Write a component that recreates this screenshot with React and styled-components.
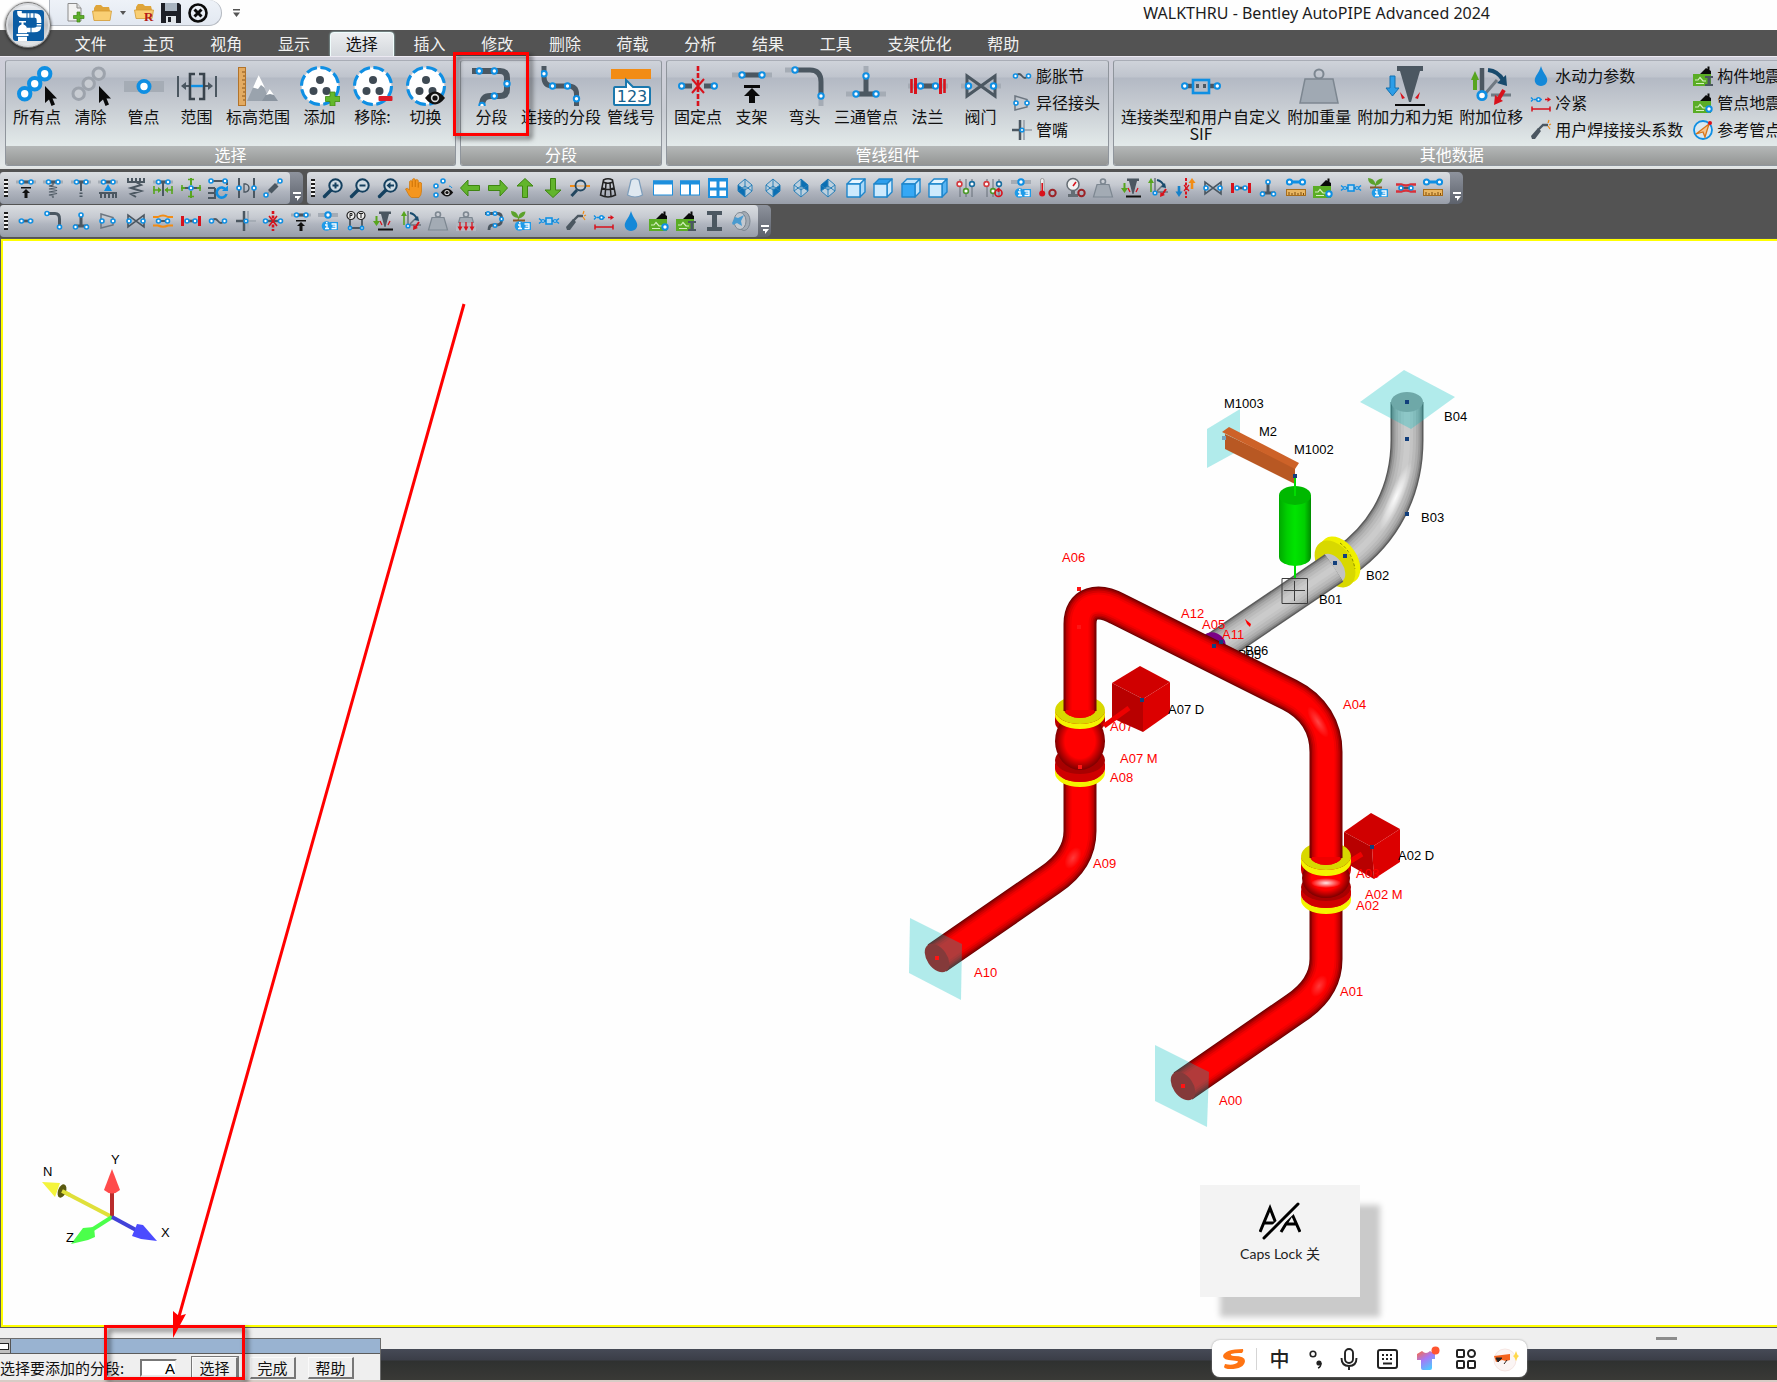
import React from "react";
import styled, { createGlobalStyle, css } from "styled-components";

const COLOR = {
  BLUE: "#0f8fe3",
  STEEL: "#4b5761",
  PALE: "#a5acb5",
  GREEN: "#57a51f",
  RED: "#d8121c",
  ORANGE: "#f28c14",
  CHROME: "#535353",
};
const CJK = `"Noto Sans CJK SC", sans-serif`;

/* ---------- shared icon parts ---------- */

const Ring = ({ x, y, r = 2, w = 1.6, c = COLOR.BLUE }) => (
  <circle cx={x} cy={y} r={r} fill="#fff" stroke={c} strokeWidth={w} />
);
const Big = ({ x, y }) => <Ring x={x} y={y} r={2.7} w={2} />;
const Line = ({ d, c = COLOR.STEEL, w = 2, ...rest }) => (
  <path d={d} fill="none" stroke={c} strokeWidth={w} {...rest} />
);
const TopBar = () => (
  <>
    <Line d="M0 4H20" c={COLOR.PALE} w={3} />
    <Line d="M6 4H15" w={3} />
    <Ring x={5.5} y={4} />
    <Ring x={15} y={4} />
  </>
);
const Cursor = () => (
  <path d="M28 20V37L32 33.500L34.500 40L38 38.500L35.500 32.500H40Z" fill="#0a0a0a" />
);
const Eye = ({ x, y, s = 1 }) => (
  <g transform={`translate(${x} ${y}) scale(${s})`}>
    <path d="M-10 0Q0 -13 10 0Q0 13 -10 0Z" fill="#111" />
    <circle r="4.200" fill="#ddd" />
    <circle r="2.600" fill="#111" />
  </g>
);
const Reel = ({ children }) => (
  <>
    <circle cx="20" cy="20" r="18.500" fill="#fff" stroke={COLOR.BLUE} strokeWidth="3" strokeDasharray="11 3.500" />
    <circle cx="20" cy="14" r="4" fill="#3f4a54" />
    <circle cx="13.500" cy="25" r="4" fill="#3f4a54" />
    <circle cx="26.500" cy="25" r="4" fill="#3f4a54" />
    {children}
  </>
);
const Weight = () => (
  <>
    <circle cx="10" cy="3.500" r="2.500" fill="none" stroke="#7d8791" strokeWidth="1.600" />
    <path d="M4 6.500H16L19.500 19H0.500Z" fill="#a3abb4" stroke="#7d8791" strokeWidth="1.200" />
  </>
);
const InfoBadge = () => (
  <>
    <circle cx="8.500" cy="15" r="4.800" fill="#1f9be8" />
    <rect x="12" y="11" width="8" height="8" fill="#1f9be8" />
    <Line d="M7 14H9V17.500M7 17.500H11M13.500 13H18V17.500H13.500M14.500 15.200H18" c="#fff" w={1.3} />
    <rect x="8" y="11" width="1.500" height="1.500" fill="#fff" />
  </>
);
const Magnifier = ({ children }) => (
  <>
    <Line d="M8 12L1.500 18.500" c="#14405f" w={3.4} strokeLinecap="round" />
    <circle cx="12.500" cy="7.500" r="6.200" fill="#cfdbe3" stroke="#14405f" strokeWidth="2" />
    {children}
  </>
);
const House = ({ children }) => (
  <>
    <path d="M7 8L13 2L14.500 3V0.500H16.500V4L18 5V9H7Z" fill="#0a0a0a" />
    <rect x="0" y="8" width="18" height="12" fill="#5aad25" />
    <Line d="M2 14H5L7 11.500L10 15H13M3 17.500H11" c="#d5efc0" w={1.2} />
    {children}
  </>
);
const Cube = ({ front, top, side }) => (
  <g stroke="#1e86cc" strokeWidth="1.400" strokeLinejoin="round">
    <path d="M1 6L6 1H19L14 6Z" fill={top} />
    <path d="M14 6L19 1V14L14 19Z" fill={side} />
    <path d="M1 6H14V19H1Z" fill={front} />
  </g>
);
const Diamond = ({ fill }) => (
  <>
    <path d="M10 1L17 7V13L10 19L3 13V7Z" fill="#bcd0de" stroke="#2b80b8" strokeWidth="1" />
    <path d={fill} fill="#0b6fb3" />
    <Line d="M10 1V19M3 7L10 12L17 7M3 13L10 8L17 13" c="#2b80b8" w={1} />
  </>
);
const Pane = ({ children }) => (
  <>
    <rect x="0.500" y="3" width="19" height="14" fill="#fff" stroke="#1e8fdd" />
    <rect x="0" y="2.500" width="20" height="4" fill="#1e8fdd" />
    {children}
  </>
);
const Bowtie = () => (
  <>
    <Line d="M2 4V16L18 4V16Z" w={1.6} />
    <Ring x={3} y={10} />
    <Ring x={17} y={10} />
  </>
);
const Sliders = ({ children }) => (
  <>
    <Line d="M4 1V19M10 1V19M16 1V19" c="#666f78" w={1} />
    <Ring x={3.5} y={6} r={2.4} c="#d33a3f" />
    <Ring x={10} y={13} r={2.4} c="#4d9a2a" />
    <Ring x={16} y={6} r={2.4} c="#1a6d9f" />
    {children}
  </>
);
const Arrow = ({ turn }) => (
  <path
    d="M0.500 10L8 2V7.500H19.500V12.500H8V18Z"
    fill="#62b52c"
    stroke="#3f8512"
    strokeWidth="1"
    transform={`rotate(${turn} 10 10)`}
  />
);
const Ruler = () => (
  <>
    <Line d="M3 4H17" c={COLOR.BLUE} w={3} />
    <Ring x={3.5} y={4} r={2.6} w={2} />
    <Ring x={16.5} y={4} r={2.6} w={2} />
    <rect x="0.500" y="11.500" width="19" height="6" fill="#e9b661" stroke="#a86d1b" />
    <Line d="M3 14V17M6 15V17M9 14V17M12 15V17M15 14V17M17.500 15V17" c="#7a4a0d" w={1} />
  </>
);

const SMALL = {
  support: (
    <>
      <TopBar />
      <path d="M5 9H15V10.500H5ZM10 11L14 15H11.500V20H8.500V15H6Z" fill="#111" />
    </>
  ),
  spring: (
    <>
      <TopBar />
      <Line d="M10 5V7L6 8L14 9.500L6 11L14 12.500L6 14L14 15.500L6 17L10 18V20" w={1.2} />
    </>
  ),
  rod: (
    <>
      <TopBar />
      <Line d="M10 5V13" w={2} />
      <Line d="M10 14.500V16M10 17.500V19" w={3} />
    </>
  ),
  ground: (
    <>
      <TopBar />
      <path d="M10 6L14 13H6Z" fill={COLOR.BLUE} />
      <Line d="M1 15H19M3 16V20M7 16V20M11 16V20M15 16V20M18 16V20" w={2} />
    </>
  ),
  coil: (
    <Line d="M1 4H19M2 0V4M6 0V4M10 0V4M14 0V4M18 0V4M10 4L15 7L5 10L15 13L5 16L10 19" w={2} />
  ),
  guide: (
    <>
      <TopBar />
      <Line d="M10 4V18" w={2} />
      <Line d="M0 12H8M12 12H20M1 8V16M19 8V16" c={COLOR.GREEN} w={1.6} />
      <path d="M8.500 12L5 9V15ZM11.500 12L15 9V15Z" fill={COLOR.GREEN} />
    </>
  ),
  restraint: (
    <>
      <Line d="M10 0V7M10 13V20M0 10H7M13 10H20" c={COLOR.GREEN} w={2} />
      <Line d="M7 1.500H13M7 18.500H13M1 7V13M19 7V13" c={COLOR.GREEN} w={1.6} />
      <Line d="M4 10H16" w={2} />
      <Ring x={10} y={10} />
    </>
  ),
  rotate: (
    <>
      <Line d="M1 3H19V7M0 10H7M0 15H7M0 20H7V10" w={2} />
      <Ring x={3} y={3} />
      <Ring x={17} y={3} />
      <Line d="M18 12A5 5 0 1 0 18.500 16" c={COLOR.BLUE} w={2.6} />
      <path d="M14 13H20V7.500Z" fill={COLOR.BLUE} />
    </>
  ),
  gap: (
    <>
      <Line d="M3 0V20M18 0V20" w={2} />
      <Ring x={3} y={10} />
      <Ring x={18} y={10} />
      <Line d="M8 6H10Q13 7 13 10Q13 13 10 14H8Z" w={1.3} />
    </>
  ),
  damper: (
    <>
      <Line d="M3 17L17 3" c="#8a939c" w={1.5} />
      <path d="M5 12L12 5L15.500 8.500L8.500 15.500Z" fill={COLOR.STEEL} />
      <Ring x={3} y={17} />
      <Ring x={17} y={3} />
    </>
  ),
  zoomIn: (
    <Magnifier>
      <Line d="M9.500 7.500H15.500M12.500 4.500V10.500" c="#14405f" w={2} />
    </Magnifier>
  ),
  zoomOut: (
    <Magnifier>
      <Line d="M9.500 7.500H15.500" c="#14405f" w={2} />
    </Magnifier>
  ),
  zoomBack: (
    <Magnifier>
      <path d="M8.500 7.500L12.500 4V6.500H16V8.500H12.500V11Z" fill="#14405f" />
    </Magnifier>
  ),
  hand: (
    <path
      d="M4.500 18L0.500 11Q2 9 4.500 12V3.500Q6 1.500 7.300 3.500V9V1.500Q9 -0.500 10.300 1.500V9V2.500Q12 0.500 13.300 2.500V9.500V5Q15 3.500 16.500 5V13Q16.500 17 14 19.500H6.500Z"
      fill="#f4961f"
      stroke="#cf7507"
      strokeWidth="0.700"
    />
  ),
  look: (
    <>
      <Ring x={10} y={3} />
      <Ring x={3} y={8} />
      <Ring x={3} y={17} />
      <Line d="M16 8Q18 8 19 10" c={COLOR.BLUE} w={1} />
      <Eye x={14} y={14.5} s={0.62} />
    </>
  ),
  left: <Arrow turn={0} />,
  right: <Arrow turn={180} />,
  up: <Arrow turn={90} />,
  down: <Arrow turn={270} />,
  probe: (
    <>
      <Line d="M0 8H20" c={COLOR.ORANGE} w={2} />
      <Line d="M7 12L1.500 18" c="#22465f" w={3} />
      <circle cx="10.500" cy="7.500" r="5" fill="#c9d2da" fillOpacity="0.600" stroke="#22465f" strokeWidth="1.800" />
    </>
  ),
  wireCone: (
    <Line
      d="M5.500 2L2.500 17Q10 21 17.500 17L14.500 2Q10 -0.500 5.500 2ZM5 4Q10 6.500 15 4M4 10Q10 13 16 10M8 5L7 18.500M12 5L13 18.500"
      c="#222"
      w={1.5}
    />
  ),
  solidCone: (
    <path d="M6 2Q10 -0.500 14 2L17.500 17Q10 21 2.500 17Z" fill="#dfe8f0" stroke="#7d9dbb" strokeWidth="1.200" />
  ),
  window1: <Pane />,
  window2: (
    <Pane>
      <Line d="M10 5V17" c="#1e8fdd" w={2} />
    </Pane>
  ),
  window4: (
    <>
      <rect x="1" y="1" width="18" height="18" fill="#fff" stroke="#1e8fdd" strokeWidth="2" />
      <Line d="M10 1V19M0 2H20M0 11H20" c="#1e8fdd" w={3} />
    </>
  ),
  isoSW: <Diamond fill="M3 7L10 12V19L3 13Z" />,
  isoSE: <Diamond fill="M17 7L10 12V19L17 13Z" />,
  isoNE: <Diamond fill="M10 1L17 7V13L10 8Z" />,
  isoNW: <Diamond fill="M10 1L3 7V13L10 8Z" />,
  cube: <Cube front="#cdeafd" top="#e8f6ff" side="#a9d8f8" />,
  cubeTop: <Cube front="#cdeafd" top="#2c9fee" side="#cdeafd" />,
  cubeFront: <Cube front="#35a8f5" top="#bfe4fc" side="#bfe4fc" />,
  cubeLight: <Cube front="#cdeafd" top="#e3f4ff" side="#57b4f3" />,
  sliders: <Sliders />,
  slidersOff: (
    <Sliders>
      <circle cx="15.500" cy="15" r="3.500" fill="none" stroke="#d8121c" strokeWidth="1.600" />
      <Line d="M15.500 10V14" c="#d8121c" w={2} />
    </Sliders>
  ),
  info: (
    <>
      <rect x="0" y="2" width="20" height="4" fill={COLOR.PALE} />
      <Big x={10} y={4} />
      <InfoBadge />
    </>
  ),
  thermo: (
    <>
      <rect x="2.500" y="0.500" width="3.500" height="14" rx="1.700" fill="#eee" stroke="#8c8c8c" strokeWidth="0.800" />
      <circle cx="4.200" cy="15.500" r="3" fill={COLOR.RED} />
      <Line d="M4.200 5V15" c={COLOR.RED} w={1.6} />
      <circle cx="14.500" cy="15" r="3.200" fill="none" stroke="#9c2226" strokeWidth="2" />
    </>
  ),
  gauge: (
    <>
      <circle cx="7" cy="6.500" r="6" fill="#f1f1f1" stroke="#656d74" strokeWidth="1.500" />
      <Line d="M7 8L10 4" c={COLOR.RED} w={1.5} />
      <path d="M5 13H9V16H12V19H2V16H5Z" fill="#656d74" />
      <circle cx="15.500" cy="15" r="3.200" fill="none" stroke="#9c2226" strokeWidth="2" />
    </>
  ),
  weight: <Weight />,
  weights: (
    <>
      <Weight />
      <rect x="0" y="12" width="20" height="8" fill="#b4b9c2" />
      <Line d="M4 11V18M10 11V18M16 11V18" c={COLOR.RED} w={1.3} />
      <path d="M1.500 15.500H6.500L4 20ZM7.500 15.500H12.500L10 20ZM13.500 15.500H18.500L16 20Z" fill={COLOR.RED} />
    </>
  ),
  force: (
    <>
      <path d="M2.500 5H4.500V10H7L3.500 15L0 10H2.500Z" fill={COLOR.GREEN} />
      <path d="M6 0.500H18V3H16L12.500 16H11.500L8 3H6Z" fill={COLOR.STEEL} />
      <Line d="M7 10L9 14M17 10L15 14" c={COLOR.RED} w={1.3} />
      <Line d="M5 18.500H20" c="#111" w={2} />
    </>
  ),
  displace: (
    <>
      <Line d="M3 5V14" c={COLOR.GREEN} w={1.6} />
      <path d="M0 5H6L3 0Z" fill={COLOR.GREEN} />
      <Line d="M7 0V14M9 13L16 6M7 14H20" c="#6b747d" w={1.5} />
      <Line d="M9 2Q14 3 16 8" c="#174a6d" w={2} />
      <path d="M18 10L13 9L17 5Z" fill="#174a6d" />
      <Line d="M18 11L14 17" c={COLOR.RED} w={2} />
      <path d="M12 19L12.500 14L17 17Z" fill={COLOR.RED} />
      <Ring x={7} y={15} r={1.8} />
    </>
  ),
  thermalMove: (
    <>
      <Line d="M10 0V20" c={COLOR.RED} w={2} strokeDasharray="3 1.500" />
      <Line d="M8 7L13 13M13 7L8 13" c={COLOR.RED} w={1.2} />
      <Line d="M3 8V15" c="#1681c9" w={2.6} />
      <path d="M-0.500 13.500H6.500L3 19Z" fill="#1681c9" />
      <Line d="M16 11V4" c={COLOR.ORANGE} w={2.6} />
      <path d="M12.500 5H19.500L16 0Z" fill={COLOR.ORANGE} />
    </>
  ),
  valve: <Bowtie />,
  flange: (
    <>
      <Line d="M5 10H15" w={2.6} />
      <Line d="M1.500 5V15M18.500 5V15" c={COLOR.RED} w={3} />
      <Ring x={6} y={10} />
      <Ring x={14} y={10} />
    </>
  ),
  tee: (
    <>
      <Line d="M3 15H17" w={3} />
      <Line d="M10 4V15" w={3} />
      <Ring x={10} y={4} />
      <Ring x={4.5} y={16} />
      <Ring x={15.5} y={16} />
    </>
  ),
  ruler: <Ruler />,
  quakePoint: (
    <House>
      <Big x={16} y={16} />
    </House>
  ),
  quakeBeam: (
    <House>
      <path d="M12 10H20V12H17.500V18H20V20H12V18H14.500V12H12Z" fill={COLOR.STEEL} />
    </House>
  ),
  joint: (
    <>
      <Line d="M0 7.500L3 10L0 12.500M20 7.500L17 10L20 12.500" c={COLOR.BLUE} w={1.4} />
      <Line d="M3 10H17" w={2} />
      <rect x="7" y="7" width="6" height="6" fill="#b8d9ee" stroke={COLOR.BLUE} strokeWidth="1.600" />
      <Ring x={4} y={10} r={1.4} w={1.2} />
      <Ring x={16} y={10} r={1.4} w={1.2} />
    </>
  ),
  plant: (
    <>
      <path d="M7 7Q0 6 0 0Q6 0 7.500 6Q8 1 14.500 0.500Q14 6 8 7.500V9H6.500Z" fill="#5ba22c" />
      <rect x="2" y="8.500" width="12" height="2" fill="#8a5a2b" />
      <InfoBadge />
    </>
  ),
  redWave: (
    <>
      <Line d="M0 6.500H5Q10 8.500 15 6.500H20M0 13.500H5Q10 11.500 15 13.500H20" c="#d8303a" w={2.6} />
      <Line d="M3 10H17" w={2} />
      <Ring x={5} y={10} />
      <Ring x={15} y={10} />
    </>
  ),
  orangeWave: (
    <>
      <Line d="M0 6H5Q10 3 15 6H20M0 14.500H5Q10 17 15 14.500H20" c={COLOR.ORANGE} w={2} />
      <Line d="M3 10H17" w={2} />
      <Ring x={5.5} y={10} />
      <Ring x={14.5} y={10} />
    </>
  ),
  pipe: (
    <>
      <Line d="M2 10H18" c={COLOR.PALE} w={3} />
      <Line d="M5 10H15" w={2.6} />
      <Ring x={5.5} y={10} />
      <Ring x={14.5} y={10} />
    </>
  ),
  bend: (
    <>
      <Line d="M2 2.500H12Q16.500 2.500 16.500 8V17" w={3} />
      <Ring x={4} y={2.5} />
      <Ring x={16.5} y={16} />
    </>
  ),
  reducer: (
    <>
      <Line d="M3 3L15 6.500V14L3 17Z" c="#6c7680" w={1.5} />
      <Ring x={4} y={10} />
      <Ring x={15} y={10} />
    </>
  ),
  bellows: (
    <>
      <Line d="M4 10Q7 6 10 10T16 10" w={1.8} />
      <Ring x={3.5} y={10} />
      <Ring x={16.5} y={10} />
    </>
  ),
  nozzle: (
    <>
      <Line d="M12 10H20M12 0V20" c={COLOR.PALE} w={2} />
      <Line d="M8 0V20M0 10H9" w={2.5} />
      <Ring x={10} y={10} r={1.8} />
    </>
  ),
  anchor: (
    <>
      <Line d="M10 0V20" c={COLOR.RED} w={2.6} strokeDasharray="3 1.500" />
      <Line d="M2 10H18" w={2.4} />
      <Line d="M6 5L14 15M14 5L6 15" c={COLOR.RED} w={1.6} />
      <Ring x={2.5} y={10} />
      <Ring x={17.5} y={10} />
    </>
  ),
  pressure: (
    <>
      <Line d="M4 8V17H16V8" w={1.8} />
      <circle cx="5" cy="4.500" r="4" fill="#eee" stroke="#222" strokeWidth="1.200" />
      <circle cx="15" cy="4.500" r="4" fill="#eee" stroke="#222" strokeWidth="1.200" />
      <Line d="M4 7V2.500H6V4.500H4M13 2.500H17M15 2.500V7" c="#222" w={1} />
      <Ring x={4} y={17} r={1.6} />
      <Ring x={16} y={17} r={1.6} />
    </>
  ),
  segment: (
    <>
      <Line d="M1 2.500H13Q17.500 2.500 17.500 6.500V9Q17.500 14 13 14H9Q5 14 5 19" w={2.8} />
      <Ring x={4} y={2.5} r={1.7} />
      <Ring x={11} y={2.5} r={1.7} />
      <Ring x={17.5} y={8} r={1.7} />
      <Ring x={11} y={14.5} r={1.7} />
    </>
  ),
  weld: (
    <>
      <path d="M0 16L7 8L10 11L4 19H1Z" fill={COLOR.STEEL} />
      <Line d="M7 10L12 5H17" w={2.4} />
      <Line d="M17 3L18 0M18 5L20 4M17 6L19 9" c={COLOR.ORANGE} w={1.2} />
    </>
  ),
  coldPull: (
    <>
      <Line d="M0 4.500L2 6.500L0 8.500M3 6.500H11" c={COLOR.BLUE} w={1.4} />
      <Ring x={7.5} y={6.5} r={1.8} />
      <Line d="M14 6.500H18M1 16H19M1 13.500V18.500M19 13.500V18.500" c={COLOR.RED} w={1.5} />
      <path d="M16.500 4L20 6.500L16.500 9Z" fill={COLOR.RED} />
    </>
  ),
  drop: <path d="M10 0Q11 4 15 10C18.500 16 14 20 10 20S1.500 16 5 10Q9 4 10 0Z" fill="#1488d8" />,
  beam: <path d="M3 0H18V4H13V16H18V20H3V16H8V4H3Z" fill={COLOR.STEEL} />,
  speaker: (
    <>
      <ellipse cx="13" cy="10" rx="6" ry="9.500" fill="#a3abb4" stroke="#7d8791" />
      <ellipse cx="9" cy="10" rx="6" ry="8.500" fill="#c3c9d0" stroke="#7d8791" />
      <path d="M1 12L4 6L7 7L13 4L10 10L11 15L6 12L2 14Z" fill="#4a9bd0" />
    </>
  ),
  compass: (
    <>
      <circle cx="10" cy="10" r="9" fill="#dbe8f0" stroke={COLOR.BLUE} strokeWidth="1.800" />
      <path d="M3 14L16 4L12 17L10 12Z" fill="#f7c48e" stroke="#d8761a" strokeWidth="1.300" />
      <circle cx="17" cy="3" r="2" fill={COLOR.RED} />
    </>
  ),
};

const CHAIN = [[27.7, 7.7], [17.7, 17.7], [7.7, 27.7]];

const LARGE = {
  allPoints: (
    <>
      {CHAIN.map(([x, y]) => (
        <Ring key={x} x={x} y={y} r={5.7} w={4} />
      ))}
      <Cursor />
    </>
  ),
  clear: (
    <>
      {CHAIN.map(([x, y]) => (
        <circle key={x} cx={x} cy={y} r="5.700" fill="#c8ccd2" stroke="#9da3ac" strokeWidth="3" />
      ))}
      <Cursor />
    </>
  ),
  point: (
    <>
      <rect x="0" y="15" width="40" height="11" fill={COLOR.PALE} />
      <Ring x={20} y={20.5} r={5.6} w={3.8} />
    </>
  ),
  range: (
    <>
      <Line d="M1 10V31M39 10V31M5 20H12M28 20H35" w={2} />
      <path d="M4 20L9 16V24ZM36 20L31 16V24Z" fill={COLOR.STEEL} />
      <Line d="M18 8H13V33H18M22 8H27V33H22" c="#39434c" w={2.6} />
      <Line d="M14 20H26" c={COLOR.BLUE} w={2.4} />
    </>
  ),
  elevation: (
    <>
      <rect x="0.500" y="1.500" width="7" height="38" fill="#e3ab62" stroke="#b2732a" />
      <Line d="M4 6H7M5 10H7M4 14H7M5 18H7M4 22H7M5 26H7M4 30H7M5 34H7" c="#8a5518" w={1} />
      <path d="M9 35L20.700 9L32 35Z" fill="#9aa3ad" />
      <path d="M20.700 9L27 22L23 19L20 23L15 21.500Z" fill="#fff" />
      <path d="M24 35L31.700 23L40 35Z" fill="#8a949f" />
      <path d="M31.700 23L36 29L32 28L28 29Z" fill="#fff" />
    </>
  ),
  add: (
    <Reel>
      <path d="M30 26H35V30.500H40V35.500H35V40H30V35.500H25.500V30.500H30Z" fill="#63b82c" stroke="#418a13" strokeWidth="0.800" />
    </Reel>
  ),
  remove: (
    <Reel>
      <rect x="25.500" y="30" width="14" height="5" rx="1" fill="#dc1c28" />
    </Reel>
  ),
  toggle: (
    <Reel>
      <Eye x={29} y={32} />
    </Reel>
  ),
  segment: (
    <>
      <Line d="M0 5H28Q35 5 35 12V23Q35 30 28 30H18Q10 30 10 40" w={6} />
      {[[7.3, 5], [22.3, 5], [35, 17.7], [22.3, 30], [10, 39.5]].map(([x, y]) => (
        <Big key={`${x}-${y}`} x={x} y={y} />
      ))}
    </>
  ),
  connected: (
    <>
      <Line d="M3 0V11Q3 20 12 20H27Q35.500 20 35.500 28V40" w={5} />
      <Big x={3} y={7.7} />
      <Big x={11.5} y={20} />
      <Big x={26.5} y={20} />
      <Big x={35.5} y={32.7} />
    </>
  ),
  lineNo: (
    <>
      <rect x="0" y="3" width="40" height="10" fill="#f28c14" />
      <path d="M4 21H15V14L22 21H37Q39 21 39 23V37Q39 39 37 39H4Q3 39 3 37V23Q3 21 4 21Z" fill="#fff" stroke="#1a78ae" strokeWidth="2" />
      <text x="21" y="36" textAnchor="middle" fontFamily="DejaVu Sans, sans-serif" fontSize="16" fill="#175f8c">
        123
      </text>
    </>
  ),
  anchor: (
    <>
      <Line d="M3 20H37" w={5} />
      <rect x="14" y="16" width="12" height="8" fill="#bfc4cc" />
      <Line d="M20 0V40" c={COLOR.RED} w={2.6} strokeDasharray="5 2" />
      <Line d="M14 13L26 27M26 13L14 27" c={COLOR.RED} w={2} />
      <Big x={3.7} y={20} />
      <Big x={36.3} y={20} />
    </>
  ),
  support: (
    <>
      <Line d="M0 9H40" c={COLOR.PALE} w={5} />
      <Line d="M10 9H30" w={5} />
      <Big x={10} y={9} />
      <Big x={30} y={9} />
      <path d="M12 19H28V22H12ZM20 22L28 30H23V37H17V30H12Z" fill="#0a0a0a" />
    </>
  ),
  elbow: (
    <>
      <Line d="M0 4H10M36 28V40" c={COLOR.PALE} w={5} />
      <Line d="M10 4H25Q36 4 36 16V29" w={5} />
      <Big x={10} y={4} />
      <Big x={36} y={30} />
    </>
  ),
  tee: (
    <>
      <Line d="M0 28H40M20 0V10" c={COLOR.PALE} w={5} />
      <Line d="M10 28H30M20 10V28" w={5} />
      <Big x={20} y={10} />
      <Big x={10} y={28} />
      <Big x={30} y={28} />
    </>
  ),
  flange: (
    <>
      <Line d="M0 20H40" c={COLOR.PALE} w={5} />
      <Line d="M12 20H28" w={5} />
      <Line d="M3.500 13V27M36.500 13V27" c={COLOR.RED} w={2.6} />
      <Line d="M7.500 12V28M32.500 12V28" c={COLOR.RED} w={3} />
      <Big x={12.5} y={20} />
      <Big x={27.5} y={20} />
    </>
  ),
  valve: (
    <>
      <Line d="M0 20H40" c={COLOR.PALE} w={5} />
      <Line d="M6 10V30L34 10V30Z" w={3} />
      <Big x={7.5} y={20} />
      <Big x={32.5} y={20} />
    </>
  ),
  userSif: (
    <>
      <Line d="M3 20H37" w={4.5} />
      <rect x="12" y="14" width="16" height="13" fill="#b5bcc6" stroke={COLOR.BLUE} strokeWidth="2.600" />
      <Line d="M15 20H18M22 20H25" w={4} />
      <Big x={3.7} y={20} />
      <Big x={36.3} y={20} />
    </>
  ),
  weight: (
    <>
      <circle cx="20" cy="8" r="4.500" fill="none" stroke="#7d8791" strokeWidth="2" />
      <path d="M6 13H34L39 37H1Z" fill="#a0a9b3" stroke="#7d8791" strokeWidth="1.500" />
    </>
  ),
  force: (
    <>
      <path d="M5 10H10V22H14L7.500 30L1 22H5Z" fill="#2b9de8" stroke="#1371b0" />
      <path d="M12 0H38V5H35L26 36H24L15 5H12Z" fill={COLOR.STEEL} />
      <path d="M15 26L20 32L17 33ZM35 26L30 32L33 33Z" fill={COLOR.RED} />
      <rect x="10" y="38" width="30" height="2.500" fill="#0a0a0a" />
    </>
  ),
  displace: (
    <>
      <Line d="M11 30V2" w={4.5} />
      <Line d="M14 28L26 14M20 29H40" c="#6f7982" w={3} />
      <Line d="M4 24V10" c={COLOR.GREEN} w={4} />
      <path d="M0 14H8L4 5Z" fill={COLOR.GREEN} />
      <Line d="M17 4Q27 5 32 14" c="#174a6d" w={4} />
      <path d="M36 20L26 17L35 9Z" fill="#174a6d" />
      <Line d="M33 24L27 34" c={COLOR.RED} w={4} />
      <path d="M23 39L24 29L32 35Z" fill={COLOR.RED} />
      <Ring x={11} y={29.5} r={4.2} w={2.8} />
    </>
  ),
};

/* ---------- data ---------- */

const TABS = [
  "文件", "主页", "视角", "显示", "选择", "插入", "修改",
  "删除", "荷载", "分析", "结果", "工具", "支架优化", "帮助",
];

const GROUPS = [
  {
    title: "选择",
    buttons: [
      ["allPoints", "所有点"],
      ["clear", "清除"],
      ["point", "管点"],
      ["range", "范围"],
      ["elevation", "标高范围"],
      ["add", "添加"],
      ["remove", "移除:"],
      ["toggle", "切换"],
    ],
    lists: [],
  },
  {
    title: "分段",
    buttons: [
      ["segment", "分段"],
      ["connected", "连接的分段"],
      ["lineNo", "管线号"],
    ],
    lists: [],
  },
  {
    title: "管线组件",
    buttons: [
      ["anchor", "固定点"],
      ["support", "支架"],
      ["elbow", "弯头"],
      ["tee", "三通管点"],
      ["flange", "法兰"],
      ["valve", "阀门"],
    ],
    lists: [
      [
        ["bellows", "膨胀节"],
        ["reducer", "异径接头"],
        ["nozzle", "管嘴"],
      ],
    ],
  },
  {
    title: "其他数据",
    buttons: [
      ["userSif", "连接类型和用户自定义", "SIF"],
      ["weight", "附加重量"],
      ["force", "附加力和力矩"],
      ["displace", "附加位移"],
    ],
    lists: [
      [
        ["drop", "水动力参数"],
        ["coldPull", "冷紧"],
        ["weld", "用户焊接接头系数"],
      ],
      [
        ["quakeBeam", "构件地震"],
        ["quakePoint", "管点地震"],
        ["compass", "参考管点"],
      ],
    ],
  },
];

const SUPPORT_TOOLS = "support spring rod ground coil guide restraint rotate gap damper".split(" ");
const VIEW_TOOLS = (
  "zoomIn zoomOut zoomBack hand look left right up down probe wireCone solidCone " +
  "window1 window2 window4 isoSW isoSE isoNE isoNW cube cubeTop cubeFront cubeLight " +
  "sliders slidersOff info thermo gauge weight force displace thermalMove valve flange " +
  "tee ruler quakePoint joint plant redWave ruler"
).split(" ");
const INSERT_TOOLS = (
  "pipe bend tee reducer valve orangeWave flange bellows nozzle anchor support info pressure " +
  "force displace weight weights segment plant joint weld coldPull drop quakePoint quakeBeam beam speaker"
).split(" ");

const LABELS = [
  ["M1003", 1224, 408], ["M2", 1259, 436], ["M1002", 1294, 454],
  ["B04", 1444, 421], ["B03", 1421, 522], ["B02", 1366, 580], ["B01", 1319, 604],
  ["B06", 1245, 655], ["A07 D", 1168, 714], ["A02 D", 1398, 860],
  ["A06", 1062, 562, 1], ["A12", 1181, 618, 1], ["A05", 1202, 629, 1], ["A11", 1222, 639, 1],
  ["A07 M", 1120, 763, 1], ["A08", 1110, 782, 1], ["A09", 1093, 868, 1], ["A10", 974, 977, 1],
  ["A04", 1343, 709, 1], ["A02 M", 1365, 899, 1], ["A02", 1356, 910, 1], ["A03", 1356, 878, 1],
  ["A01", 1340, 996, 1], ["A00", 1219, 1105, 1],
];

/* ---------- 3D model ---------- */

const GRAY_PIPE = [[33, "#5c5c5c"], [30, "#828282"], [27, "#9b9b9b"], [23, "#adadad"], [18, "#bababa"], [12, "#c4c4c4"], [6, "#cbcbcb"]];
const RED_PIPE = [[33, "#6e0000"], [31, "#930000"], [28, "#b80000"], [25, "#d60000"], [21, "#f00000"], [17, "#ff0000"]];

const Pipe = ({ d, layers = RED_PIPE }) => (
  <g fill="none">
    {layers.map(([w, c]) => (
      <path key={w} d={d} stroke={c} strokeWidth={w} />
    ))}
  </g>
);

const PipeEnd = ({ x, y }) => (
  <ellipse cx={x} cy={y} rx="16" ry="10" fill="#be0000" transform={`rotate(55 ${x} ${y})`} />
);

const Plane = ({ points }) => <polygon points={points} fill="rgba(0,193,193,0.300)" />;

const Dot = ({ x, y, c = "#123f7c" }) => <rect x={x - 2} y={y - 2} width="4" height="4" fill={c} />;

const Drum = ({ x, y, h, fill, top }) => (
  <>
    <path d={`M${x - 25} ${y}A25 14 0 0 0 ${x + 25} ${y}V${y + h}A25 14 0 0 1 ${x - 25} ${y + h}Z`} fill={fill} />
    <ellipse cx={x} cy={y} rx="25" ry="14" fill={top} />
  </>
);

const Model = () => (
  <ModelSvg aria-hidden="true">
    <defs>
      <radialGradient id="ball">
        <stop offset="0.600" stopColor="#ff0000" />
        <stop offset="1" stopColor="#7c0000" />
      </radialGradient>
      <radialGradient id="shine">
        <stop offset="0" stopColor="#fff" stopOpacity="0.900" />
        <stop offset="1" stopColor="#fff" stopOpacity="0" />
      </radialGradient>
      <linearGradient id="can">
        <stop offset="0" stopColor="#00a800" />
        <stop offset="0.250" stopColor="#00cf00" />
        <stop offset="0.500" stopColor="#00e400" />
        <stop offset="0.800" stopColor="#00cf00" />
        <stop offset="1" stopColor="#008a00" />
      </linearGradient>
    </defs>
    <g transform="translate(-3 -241)">
      {/* run B */}
      <Pipe layers={GRAY_PIPE} d="M1340 564L1345 561C1385 533 1407 490 1407 440V402" />
      <ellipse cx="1396" cy="497" rx="7" ry="38" fill="url(#shine)" transform="rotate(24 1396 497)" />
      <ellipse cx="1407" cy="402" rx="16" ry="10" fill="#9e9e9e" />
      <Plane points="1404,370 1455,397 1411,429 1360,402" />
      <ellipse cx="1340" cy="560" rx="26" ry="17" fill="#f0f000" transform="rotate(55 1340 560)" />
      <ellipse cx="1335" cy="564" rx="26" ry="17" fill="#d8d800" transform="rotate(55 1335 564)" />
      <Line d="M1340 543Q1352 552 1355 569" c="#8a8a00" w={1} strokeDasharray="3 2" />
      <ellipse cx="1333" cy="568" rx="16" ry="10" fill="#c2c2c2" transform="rotate(55 1333 568)" />
      <Pipe layers={GRAY_PIPE} d="M1216 648L1334 568" />
      <ellipse cx="1214" cy="642" rx="12" ry="9" fill="#7b0086" transform="rotate(25 1214 642)" />
      <Label as="text" x="1238" y="659">B05</Label>
      <path d="M1245 619L1251 624L1250 627L1247 624Z" fill="#ff0000" />

      {/* spring hanger and beam */}
      <Plane points="1207,429 1240,409 1240,450 1207,468" />
      <polygon points="1225,434 1295,467 1295,484 1225,449" fill="#b85823" />
      <polygon points="1222,432 1229,427 1299,463 1295,469" fill="#cd6228" />
      <Line d="M1295 560V579" c="#00dc00" w={2} />
      <path d="M1279 495V557A16 9 0 0 0 1311 557V495Z" fill="url(#can)" />
      <ellipse cx="1295" cy="495.500" rx="16" ry="9.500" fill="#00b800" />
      <Line d="M1295 476V496" c="#00dc00" w={2} />

      {/* run A */}
      <Pipe d="M937 958L1050 880Q1080 860 1080 831V775" />
      <ellipse cx="1073" cy="858" rx="7" ry="12" fill="url(#shine)" opacity="0.250" transform="rotate(30 1073 858)" />
      <Pipe d="M1183 1086L1296 1008Q1326 988 1326 959V900" />
      <ellipse cx="1319" cy="986" rx="7" ry="12" fill="url(#shine)" opacity="0.250" transform="rotate(30 1319 986)" />
      <PipeEnd x={937} y={958} />
      <PipeEnd x={1183} y={1086} />
      <Plane points="910,918 962,944 961,1000 909,973" />
      <Plane points="1155,1045 1209,1072 1207,1127 1155,1101" />

      {/* left valve */}
      <Label as="text" $red x="1110" y="731">A07</Label>
      <Drum x={1080} y={768} h={5} fill="#f4f400" top="#d40000" />
      <Drum x={1080} y={760} h={7} fill="#cf0000" top="#a80000" />
      <Drum x={1080} y={714} h={8} fill="#b80000" top="#b80000" />
      <ellipse cx="1080" cy="741" rx="25" ry="29" fill="url(#ball)" />
      <Drum x={1080} y={710} h={5} fill="#f4f400" top="#d8d800" />
      <ellipse cx="1080" cy="709" rx="16" ry="9" fill="#e00000" />

      {/* right valve */}
      <polygon points="1371,813 1400,829 1372,847 1344,832" fill="#d00000" />
      <polygon points="1344,832 1372,847 1374,879 1344,862" fill="#b80000" />
      <polygon points="1372,847 1400,829 1400,862 1374,879" fill="#dc0000" />
      <Line d="M1349 862L1362 854" c="#f00000" w={5} />
      <Drum x={1326} y={894} h={6} fill="#f4f400" top="#d40000" />
      <Drum x={1326} y={887} h={6} fill="#cf0000" top="#a80000" />
      <Drum x={1326} y={860} h={10} fill="#cf0000" top="#b80000" />
      <ellipse cx="1326" cy="878" rx="24" ry="20" fill="url(#ball)" />
      <ellipse cx="1326" cy="883" rx="15" ry="5" fill="url(#shine)" />
      <Drum x={1326} y={856} h={6} fill="#f4f400" top="#d8d800" />
      <ellipse cx="1326" cy="856" rx="16" ry="9" fill="#e00000" />

      <Pipe d="M1080 711V624C1080 602 1098 598 1118 609L1290 695C1314 707 1326 728 1326 752V858" />
      <path d="M1066 710A14 8 0 0 0 1094 710ZM1312 857A14 8 0 0 0 1340 857Z" fill="#f00000" />
      <ellipse cx="1318" cy="722" rx="6" ry="18" fill="url(#shine)" opacity="0.300" transform="rotate(-32 1318 722)" />

      {/* operator of the left valve */}
      <polygon points="1140,666 1170,682 1143,699 1112,683" fill="#d00000" />
      <polygon points="1112,683 1143,699 1143,732 1112,718" fill="#b80000" />
      <polygon points="1143,699 1170,682 1170,713 1143,732" fill="#dc0000" />
      <Line d="M1104 726L1129 708" c="#ee0000" w={5} />

      {[[1407, 402], [1407, 439], [1407, 514], [1345, 556], [1335, 563], [1295, 476], [1214, 646], [1221, 642], [1142, 700], [1372, 847]].map(
        ([x, y]) => <Dot key={`${x}-${y}`} x={x} y={y} />
      )}
      <Dot x={1224} y={438} c="#76a5c0" />
      {[[1079, 589], [1079, 627], [937, 958], [1183, 1086], [1080, 767]].map(([x, y]) => (
        <Dot key={`${x}-${y}`} x={x} y={y} c="#ff1414" />
      ))}

      <path d="M1282 578.500H1307.500V603.500H1282Z" fill="none" stroke="#3c3c3c" />
      <Line d="M1284 590.500H1305M1294.500 581V601" c="#3c3c3c" w={1} />

      {LABELS.map(([text, x, y, red]) => (
        <Label as="text" key={text} $red={red} x={x} y={y}>
          {text}
        </Label>
      ))}

      {/* axes */}
      <Line d="M112 1217L62 1191" c="#e0e03a" w={4} />
      <ellipse cx="62" cy="1191" rx="4" ry="7" fill="#5a5a10" transform="rotate(20 62 1191)" />
      <polygon points="42,1182 60,1183 55,1197" fill="#f4f43c" />
      <Line d="M62 1191L70 1195" c="#e0e03a" w={4} />
      <Line d="M112 1217V1190" c="#b82c2c" w={4} />
      <path d="M112 1169L120 1190Q112 1197 104 1190Z" fill="#ff4b4b" />
      <Line d="M112 1217L90 1231" c="#4bff4b" w={4} />
      <polygon points="71,1244 83,1228 94,1227 95,1237 88,1240" fill="#4bff4b" />
      <Line d="M112 1217L136 1230" c="#4242d8" w={4} />
      <polygon points="157,1241 143,1225 137,1224 132,1236 141,1239" fill="#4b4bff" />
      <Label as="text" x="43" y="1176">N</Label>
      <Label as="text" x="111" y="1164">Y</Label>
      <Label as="text" x="161" y="1237">X</Label>
      <Label as="text" x="66" y="1242">Z</Label>
    </g>
  </ModelSvg>
);

/* ---------- window parts ---------- */

const Small = ({ name }) => <SmallIcon viewBox="0 0 20 20">{SMALL[name]}</SmallIcon>;

const Toolbar = ({ tools, width }) => (
  <StyledToolbar $width={width}>
    <ToolbarBody>
      <Grip />
      {tools.map((name, i) => (
        <ToolButton key={i} aria-label={name}>
          <Small name={name} />
        </ToolButton>
      ))}
    </ToolbarBody>
    <Overflow aria-label="more">
      <svg width="8" height="9" viewBox="0 0 8 9">
        <path d="M0 0H8V2H0ZM2 4H8L4 9V6H2Z" fill="#fff" />
      </svg>
    </Overflow>
  </StyledToolbar>
);

const QuickAccess = () => (
  <StyledQuick>
    <QuickButton aria-label="new" $width={26}>
      <svg width="20" height="20" viewBox="0 0 20 20">
        <path d="M2 0.500H11L15 5V18H2Z" fill="#f2f2f2" stroke="#8b8b8b" />
        <path d="M11 0.500V5H15" fill="#ddd" stroke="#8b8b8b" />
        <path d="M11 9H14V12.500H18V15.500H14V19H11V15.500H7.500V12.500H11Z" fill="#5db02a" stroke="#3f8512" strokeWidth="0.700" />
      </svg>
    </QuickButton>
    <QuickButton aria-label="open" $width={26}>
      <svg width="20" height="20" viewBox="0 0 20 20">
        <path d="M2 5L4 2H9L11 4H17L18 8V16H2Z" fill="#dfa53a" />
        <path d="M0.500 8H19.500L18 17.500H2Z" fill="#f9cf74" stroke="#d39a34" strokeWidth="0.800" />
      </svg>
    </QuickButton>
    <QuickButton aria-label="recent" $width={15}>
      <svg width="6" height="4" viewBox="0 0 6 4">
        <path d="M0 0H6L3 4Z" fill="#555" />
      </svg>
    </QuickButton>
    <QuickButton aria-label="reload" $width={27}>
      <svg width="20" height="20" viewBox="0 0 20 20" overflow="visible">
        <path d="M2 4L4 1H9L11 3H17L18 7V14H2Z" fill="#dfa53a" />
        <path d="M0.500 7H19.500L18 15.500H2Z" fill="#f9cf74" stroke="#d39a34" strokeWidth="0.800" />
        <text x="10" y="18" fontFamily="Liberation Serif, serif" fontWeight="700" fontSize="13" fill="#b51a1a">
          R
        </text>
      </svg>
    </QuickButton>
    <QuickButton aria-label="save" $width={27}>
      <svg width="20" height="20" viewBox="0 0 20 20">
        <path d="M0 0H18L20 2V20H0Z" fill="#1d1f26" />
        <rect x="4" y="0" width="12" height="8" fill="#a9b4c0" />
        <rect x="5" y="13" width="10" height="7" fill="#dfe3e7" />
        <rect x="7" y="14" width="3" height="5" fill="#1d1f26" />
      </svg>
    </QuickButton>
    <QuickButton aria-label="close" $width={27}>
      <svg width="20" height="20" viewBox="0 0 20 20">
        <circle cx="10" cy="10" r="8.500" fill="none" stroke="#0a0a0a" strokeWidth="2.600" />
        <Line d="M6.500 6.500L13.500 13.500M13.500 6.500L6.500 13.500" c="#0a0a0a" w={3} />
      </svg>
    </QuickButton>
  </StyledQuick>
);

const Orb = () => (
  <StyledOrb aria-label="menu">
    <svg width="31" height="31" viewBox="0 0 31 31">
      <rect width="31" height="31" rx="3" fill="#0a5ca4" />
      <path d="M6.500 1V3Q6.500 5.500 10 5.500H22Q26 5.500 26 10V16Q26 20 21 20H14" fill="none" stroke="#fff" strokeWidth="4.600" />
      <Line d="M14 2V9M17 2V9M21 2V9M23 13.500H30M23 16H30M18 17V24" c="#0a5ca4" w={1} />
      <path d="M6 11H13V12.500H10.500V14.500Q14 15.500 14 19V24H15.500V26H14V31H5V26H3.500V24H5V19Q5 15.500 8.500 14.500V12.500H6Z" fill="#fff" />
      <Line d="M5 23.500H14M5 26.500H14" c="#0a5ca4" w={0.8} />
    </svg>
  </StyledOrb>
);

const Ribbon = () => (
  <StyledRibbon>
    {GROUPS.map((group) => (
      <Group key={group.title}>
        <GroupBody>
          {group.buttons.map(([icon, text, second]) => (
            <BigButton key={text}>
              <svg width="40" height="40" viewBox="0 0 40 40">{LARGE[icon]}</svg>
              <span>{text}</span>
              {second && <span>{second}</span>}
            </BigButton>
          ))}
          {group.lists.map((list) => (
            <ButtonList key={list[0][1]}>
              {list.map(([icon, text]) => (
                <ListButton key={text}>
                  <Small name={icon} />
                  {text}
                </ListButton>
              ))}
            </ButtonList>
          ))}
        </GroupBody>
        <GroupTitle>{group.title}</GroupTitle>
      </Group>
    ))}
  </StyledRibbon>
);

const SegmentDialog = () => (
  <Dialog>
    <DialogTitle>
      <DialogMenu aria-label="window menu" />
    </DialogTitle>
    <DialogRow>
      <label htmlFor="segment">选择要添加的分段:</label>
      <DialogInput id="segment" defaultValue="A" />
      <DialogButtons>
        <DialogButton $active>选择</DialogButton>
        <DialogButton>完成</DialogButton>
        <DialogButton>帮助</DialogButton>
      </DialogButtons>
    </DialogRow>
  </Dialog>
);

const CapsLock = () => (
  <CapsCard>
    <svg width="42" height="38" viewBox="0 0 42 38">
      <g fill="none" stroke="#000" strokeWidth="3">
        <path d="M1 30L11 6L18 24M5 21H15M22 30L33 12L41 30M27 22H38" />
        <path d="M3 38L41 1" stroke="#f3f3f3" strokeWidth="7" />
        <path d="M5 36L39 2" strokeLinecap="round" />
      </g>
    </svg>
    Caps Lock 关
  </CapsCard>
);

const ImeBar = () => (
  <StyledIme>
    <ImeButton aria-label="logo" $width={45}>
      <svg width="24" height="22" viewBox="0 0 24 22">
        <path
          d="M21 1Q22 3 20 5Q14 4.500 9 6Q8 7.500 12 8Q23 8 23 13Q22 21 8 21Q3 21 2 19L3 16Q12 18 16 14Q16 12.500 11 12.500Q1 12 1 8Q3 1 21 1Z"
          fill="#ff7412"
        />
      </svg>
    </ImeButton>
    <ImeButton $width={45}>中</ImeButton>
    <ImeButton aria-label="punctuation" $width={28}>
      <svg width="14" height="20" viewBox="0 0 14 20">
        <circle cx="4" cy="5" r="2.800" fill="none" stroke="#222" strokeWidth="1.600" />
        <circle cx="10" cy="14" r="2.600" fill="#222" />
        <path d="M12 14Q12 18 9 19" fill="none" stroke="#222" strokeWidth="1.400" />
      </svg>
    </ImeButton>
    <ImeButton aria-label="voice" $width={38}>
      <svg width="18" height="22" viewBox="0 0 18 22" fill="none" stroke="#222" strokeWidth="1.900">
        <rect x="5" y="1" width="8" height="14" rx="4" />
        <path d="M1.500 10Q1.500 18 9 18T16.500 10M9 18V22" />
      </svg>
    </ImeButton>
    <ImeButton aria-label="keyboard" $width={40}>
      <svg width="22" height="20" viewBox="0 0 22 20" fill="none" stroke="#222" strokeWidth="2">
        <rect x="1" y="1" width="19" height="18" rx="2" />
        <path d="M5 6H16M5 10H16" strokeDasharray="2 2" />
        <path d="M6 14.500H15" />
      </svg>
    </ImeButton>
    <ImeButton aria-label="skin" $width={40}>
      <svg width="24" height="26" viewBox="0 0 24 26">
        <defs>
          <linearGradient id="shirt" x1="0" y1="0" x2="0.600" y2="1">
            <stop offset="0" stopColor="#ff6a3c" />
            <stop offset="0.500" stopColor="#a678f5" />
            <stop offset="1" stopColor="#52c6ff" />
          </linearGradient>
        </defs>
        <path d="M1 8L6 5Q10 9 14 5L19 8V13H16V22Q16 24 14 24H7Q5 24 5 22V14H1Z" fill="url(#shirt)" />
        <circle cx="19.500" cy="4.500" r="4" fill="#ff5530" />
      </svg>
    </ImeButton>
    <ImeButton aria-label="tools" $width={36}>
      <svg width="20" height="20" viewBox="0 0 20 20" fill="none" stroke="#222" strokeWidth="2">
        <rect x="1" y="1" width="7" height="7" rx="1" />
        <circle cx="15.500" cy="4.500" r="3.500" />
        <rect x="1" y="12" width="7" height="7" rx="1" />
        <rect x="12" y="12" width="7" height="7" rx="1" />
      </svg>
    </ImeButton>
    <ImeButton aria-label="assistant" $width={43}>
      <svg width="26" height="26" viewBox="0 0 26 26">
        <circle cx="12" cy="14" r="11" fill="#fbf5f4" stroke="#f6e6e3" />
        <path d="M1 10L17 8V14L13 15L9 14L3 16Z" fill="#f4641e" />
        <path d="M3 12L9 12L5 16ZM14 14L11 18" fill="#2b2320" stroke="#2b2320" />
        <path d="M23 5L24.500 9L26 10L24.500 11.500L23 15L21.500 11.500L20 10L21.500 9Z" fill="#ffd84a" />
      </svg>
    </ImeButton>
  </StyledIme>
);

/* the marked controls and the arrow that ties them together */
const Markup = () => (
  <MarkupSvg aria-hidden="true">
    <defs>
      <filter id="drop" x="-20%" y="-20%" width="150%" height="150%">
        <feDropShadow dx="3" dy="3" stdDeviation="2.500" floodOpacity="0.600" />
      </filter>
    </defs>
    <g fill="none" stroke="#ff0000" strokeWidth="3">
      <rect x="454.500" y="53.500" width="73" height="81" filter="url(#drop)" />
      <rect x="105.500" y="1326.500" width="138" height="52" filter="url(#drop)" />
      <path d="M464 304L178 1320" />
    </g>
    <polygon points="173,1338 173,1311 179,1316 186,1314" fill="#ff0000" />
  </MarkupSvg>
);

const App = () => {
  return (
    <Page>
      <GlobalStyle />
      <TitleBar>
        <QuickAccess />
        <QuickMore aria-label="customize">
          <svg width="7" height="8" viewBox="0 0 7 8">
            <path d="M0 0H7V1.500H0ZM0 3.500H7L3.500 8Z" fill="#555" />
          </svg>
        </QuickMore>
        <WindowTitle>WALKTHRU - Bentley AutoPIPE Advanced 2024</WindowTitle>
      </TitleBar>
      <Orb />
      <TabBar>
        <Tabs>
          {TABS.map((tab) => (
            <Tab key={tab} $active={tab === "选择"}>
              {tab}
            </Tab>
          ))}
        </Tabs>
      </TabBar>
      <Ribbon />
      <ToolbarArea>
        <ToolbarRow>
          <Toolbar tools={SUPPORT_TOOLS} width={303} />
          <Toolbar tools={VIEW_TOOLS} width={1156} />
        </ToolbarRow>
        <ToolbarRow>
          <Toolbar tools={INSERT_TOOLS} width={771} />
        </ToolbarRow>
      </ToolbarArea>
      <Viewport>
        <Model />
      </Viewport>
      <StatusStrip>
        <Dash />
      </StatusStrip>
      <Taskbar />
      <SegmentDialog />
      <CapsLock />
      <ImeBar />
      <Markup />
    </Page>
  );
};
export default App;

const GlobalStyle = createGlobalStyle`
  * {
    box-sizing: border-box;
  }
  body {
    margin: 0;
    overflow-x: hidden;
    font-family: ${CJK};
  }
  button {
    border: 0;
    padding: 0;
    background: none;
    color: inherit;
    font: inherit;
  }
`;
const Page = styled.div`
  position: relative;
  display: flex;
  flex-direction: column;
  min-height: 100vh;
  overflow: hidden;
  background-color: #fefefe;
`;
const TitleBar = styled.header`
  display: flex;
  height: 30px;
  background-color: #fefefe;
`;
const StyledQuick = styled.div`
  display: flex;
  align-items: center;
  height: 26px;
  margin-left: 49px;
  padding: 0 10px 0 13px;
  border: 1px solid #b3b8c0;
  border-top: 0;
  border-radius: 0 14px 14px 0;
  background: linear-gradient(#eef2f8, #e2e8f1);
`;
const QuickButton = styled.button`
  display: flex;
  align-items: center;
  justify-content: center;
  width: ${({ $width }) => $width}px;
  height: 26px;
`;
const QuickMore = styled.button`
  display: flex;
  align-items: center;
  height: 26px;
  margin-left: 11px;
`;
const WindowTitle = styled.div`
  margin-left: auto;
  margin-right: 287px;
  font-family: "Noto Sans", sans-serif;
  font-size: 16px;
  line-height: 27px;
  white-space: nowrap;
  color: #1c1c1c;
`;
const StyledOrb = styled.button`
  position: absolute;
  top: 2px;
  left: 5px;
  display: flex;
  align-items: center;
  justify-content: center;
  width: 46px;
  height: 46px;
  border: 1px solid #777;
  border-radius: 50%;
  background: linear-gradient(#f4f6f8, #b9bcc1 50%, #e8ebee);
  box-shadow: inset 0 0 0 2px #d8dadd, 0 1px 3px #222;
`;
const TabBar = styled.nav`
  height: 26px;
  padding-left: 57px;
  background-color: ${COLOR.CHROME};
`;
const Tabs = styled.div`
  display: flex;
  max-width: 980px;
  height: 100%;
`;
const Tab = styled.button`
  flex: 1 0 auto;
  margin: 2px 2px 0;
  padding-bottom: 3px;
  border: 1px solid transparent;
  border-bottom: 0;
  font-size: 16px;
  line-height: 20px;
  color: #f1f1f1;
  ${({ $active }) =>
    $active &&
    css`
      border-color: #effcfc;
      border-radius: 4px 4px 0 0;
      background: linear-gradient(#eceef0, #d3d7dc);
      box-shadow: 0 0 2px #bdf2f2;
      color: #111;
    `}
`;
const StyledRibbon = styled.section`
  display: flex;
  gap: 4px;
  padding: 3px 5px 1px;
  overflow: hidden;
  border-top: 1px solid #ece9f2;
  border-bottom: 2px solid #e1e4e4;
  background: linear-gradient(#cfcfda, #c9cdd4 50%, #e4e9e9);
`;
const Group = styled.div`
  flex: none;
  border: 1px solid #8f959c;
  border-top-color: #a9adb6;
  border-radius: 3px;
  background: linear-gradient(#cfd3da, #bfc4cd 16px, #b3b9c4 17px, #c3c8cf 40px, #e2e9e9 84px);
`;
const GroupBody = styled.div`
  display: flex;
  height: 85px;
  padding: 5px 3px 0 4px;
`;
const GroupTitle = styled.div`
  padding-bottom: 2px;
  border-radius: 0 0 2px 2px;
  background: linear-gradient(#b5b8b8, #939594);
  font-size: 16px;
  line-height: 17px;
  text-align: center;
  color: #fff;
`;
const BigButton = styled.button`
  display: flex;
  flex-direction: column;
  align-items: center;
  min-width: 53px;
  padding: 0 3px;
  font-size: 16px;
  line-height: 17px;
  white-space: nowrap;
  color: #111;
  svg {
    flex: none;
    margin-bottom: 2px;
  }
`;
const ButtonList = styled.div`
  display: flex;
  flex-direction: column;
  gap: 7px;
  padding: 0 5px;
`;
const ListButton = styled.button`
  display: flex;
  align-items: flex-start;
  gap: 4px;
  font-size: 16px;
  line-height: 18px;
  white-space: nowrap;
  color: #111;
`;
const SmallIcon = styled.svg`
  flex: none;
  width: 20px;
  height: 20px;
  overflow: visible;
`;
const ToolbarArea = styled.div`
  display: flex;
  flex-direction: column;
  gap: 1px;
  padding: 3px 0 1px;
  background-color: ${COLOR.CHROME};
`;
const ToolbarRow = styled.div`
  display: flex;
  gap: 4px;
`;
const StyledToolbar = styled.div`
  display: flex;
  flex: none;
  width: ${({ $width }) => $width}px;
  height: 32px;
  border-radius: 3px 5px 5px 3px;
  background: linear-gradient(#8e939d, #5d626c);
`;
const ToolbarBody = styled.div`
  display: flex;
  flex: 1;
  align-items: center;
  padding-right: 3px;
  border-radius: 4px;
  background: linear-gradient(#dadde1, #c5c9d0 40%, #b0b5bf 60%, #979da8);
`;
const Grip = styled.div`
  width: 4px;
  height: 18px;
  margin: 0 4px;
  background: repeating-linear-gradient(#1f1f1f 0 2px, #f5f5f5 2px 4px);
`;
const ToolButton = styled.button`
  display: flex;
  flex: 1;
  justify-content: center;
`;
const Overflow = styled.button`
  display: flex;
  align-items: flex-end;
  justify-content: center;
  width: 13px;
  padding-bottom: 3px;
`;
const Viewport = styled.main`
  display: flex;
  flex: 1;
  min-height: 300px;
  border: 2px solid #ffff00;
  border-right: 0;
  outline: 1px solid #5a5a5a;
  margin: 1px 0 1px 1px;
  background-color: #fefefe;
`;
const ModelSvg = styled.svg`
  flex: 1;
  min-width: 0;
`;
const Label = styled.text`
  font-family: "Liberation Sans", sans-serif;
  font-size: 13px;
  fill: ${({ $red }) => ($red ? "#ff0000" : "#000")};
`;
const StatusStrip = styled.div`
  display: flex;
  justify-content: flex-end;
  height: 21px;
  padding: 9px 100px 0 0;
  background-color: #efefef;
`;
const Dash = styled.div`
  width: 21px;
  height: 3px;
  background-color: #8c8c8c;
`;
const Taskbar = styled.footer`
  height: 33px;
  border-bottom: 2px solid #d8ccc6;
  background: linear-gradient(#464a56, #3b3e48 11px, #2f3130 12px, #393936);
`;
const Dialog = styled.form`
  position: absolute;
  left: 0;
  bottom: 2px;
  width: 381px;
  border-top: 1px solid #6c6c6c;
  border-right: 1px solid #6c6c6c;
  background-color: #efefef;
`;
const DialogTitle = styled.div`
  height: 15px;
  border-bottom: 1px solid #5c5c5c;
  background-color: #99b3d1;
`;
const DialogMenu = styled.button`
  display: flex;
  align-items: center;
  width: 11px;
  height: 14px;
  border-right: 1px solid #555;
  background-color: #c0c0c0;
  &::before {
    content: "";
    width: 8px;
    height: 5px;
    border: 1px solid #222;
    border-left: 0;
    background-color: #fff;
  }
`;
const DialogRow = styled.div`
  display: flex;
  align-items: center;
  height: 26px;
  padding-top: 2px;
  font-size: 15px;
  line-height: 20px;
  white-space: nowrap;
  color: #111;
`;
const DialogInput = styled.input`
  width: 37px;
  height: 18px;
  margin: 0 15px 0 auto;
  padding: 0;
  border: 2px solid #777;
  border-right-color: #eee;
  border-bottom-color: #eee;
  background-color: #fff;
  font-family: "Liberation Sans", sans-serif;
  font-size: 15px;
  text-align: right;
`;
const DialogButtons = styled.div`
  display: flex;
  gap: 12px;
  margin-right: 26px;
`;
const DialogButton = styled.button`
  width: 46px;
  height: 22px;
  border: 1px solid #fafafa;
  border-right: 2px solid #777;
  border-bottom: 2px solid #777;
  box-shadow: ${({ $active }) => ($active ? "0 0 0 1px #777" : "none")};
  background-color: #efefef;
`;
const CapsCard = styled.div`
  position: absolute;
  right: 417px;
  bottom: 85px;
  display: flex;
  flex-direction: column;
  align-items: center;
  gap: 5px;
  width: 160px;
  height: 112px;
  padding-top: 17px;
  background-color: #f3f3f3;
  box-shadow: 20px 20px 6px #cacaca;
  font-family: Lato, ${CJK};
  font-size: 14px;
  line-height: 18px;
  color: #222;
`;
const StyledIme = styled.div`
  position: absolute;
  right: 250px;
  bottom: 5px;
  display: flex;
  align-items: center;
  height: 37px;
  border-radius: 8px;
  background-color: #fff;
  box-shadow: 0 0 2px #999;
`;
const ImeButton = styled.button`
  display: flex;
  align-items: center;
  justify-content: center;
  width: ${({ $width }) => $width}px;
  height: 22px;
  font-size: 20px;
  font-weight: 500;
  line-height: 22px;
  color: #222;
  &:first-child {
    border-right: 1px solid #d5d5d5;
  }
`;
const MarkupSvg = styled.svg`
  position: absolute;
  inset: 0;
  width: 100%;
  height: 100%;
  pointer-events: none;
`;
